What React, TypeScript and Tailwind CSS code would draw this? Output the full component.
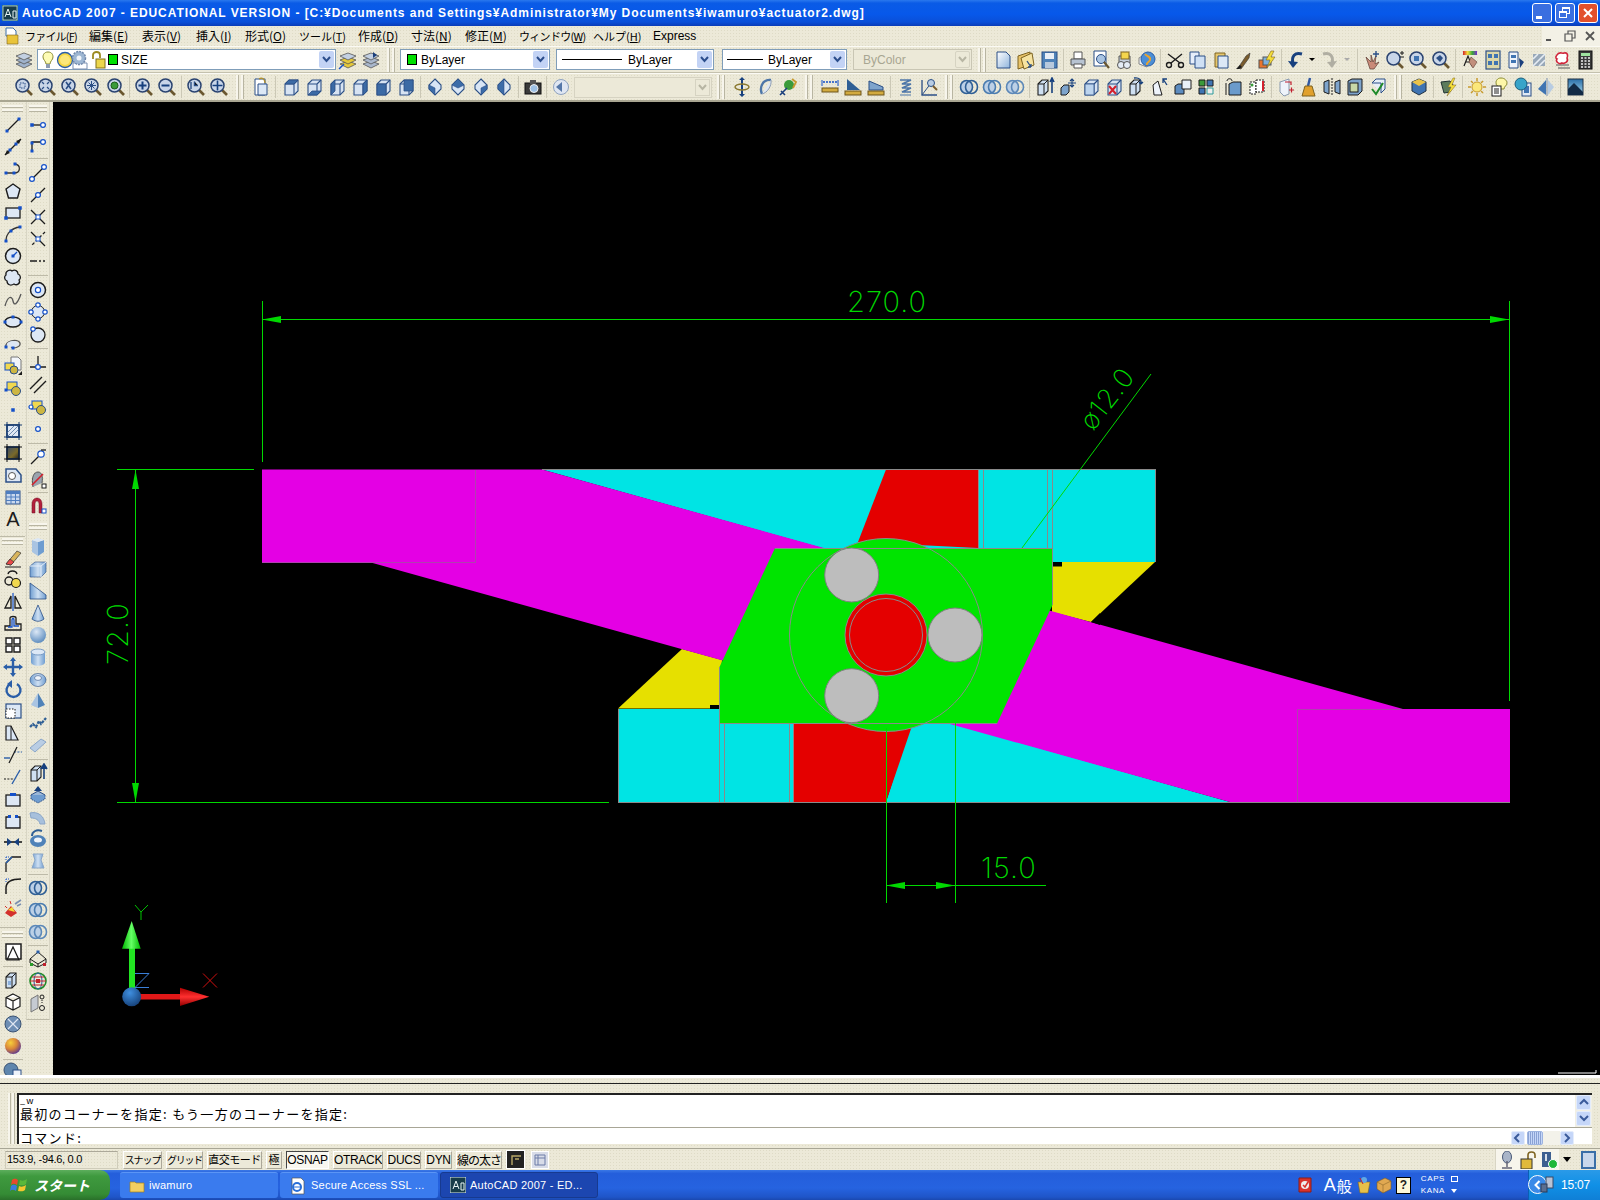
import type { ReactNode } from "react";

const k = "#1c1c1c";
const b = "#1450c8";
const f = "#dde7f4";
const sb = "url(#sb)";
const dk = "#2b4f86";
// speckled 8-bit beige of the toolbars
const dither = "bg-[#ece9d8] bg-[radial-gradient(#dedbc6_0.6px,transparent_0.7px)] bg-[length:3px_3px]";

const N = (x: number, y: number, s = 3) => <rect x={x - s / 2} y={y - s / 2} width={s} height={s} fill={b} />;
const O = (x: number, y: number, r = 2) => <circle cx={x} cy={y} r={r} fill="#fff" stroke={b} strokeWidth="1.2" />;
const P = (d: string, c = k, w = 1.3) => <path d={d} fill="none" stroke={c} strokeWidth={w} />;
const F = (d: string, c = sb, s = dk) => <path d={d} fill={c} stroke={s} strokeWidth="0.8" />;

// magnifier with something in the lens
const mag = (inner?: ReactNode) => (
  <>
    <path d="M13 13L18 18" stroke="#6a5730" strokeWidth="2.6" />
    <circle cx="8.5" cy="8.5" r="6.5" fill="#c8d5e8" stroke="#2a4370" strokeWidth="1.5" />
    {inner}
  </>
);
// wire cube, shade picks the filled face
const cube = (d?: string, c = "#3b6aa5") => (
  <>
    <path d="M4 7L8 3H17V14L13 18H4Z" fill="#d7e3f2" stroke={dk} strokeWidth="1.1" />
    <path d="M4 7H13V18M13 7L17 3" fill="none" stroke={dk} strokeWidth="1.1" />
    {d ? <path d={d} fill={c} stroke={dk} strokeWidth="0.8" /> : null}
  </>
);
const diamond = (d: string) => (
  <>
    <path d="M10 2L16 8V12L10 18L4 12V8Z" fill="#d8e5f5" stroke={dk} strokeWidth="1.1" />
    <path d={d} fill="#3c6ca8" stroke={dk} strokeWidth="0.6" />
  </>
);
const rings = (c = "#2f5f95") => (
  <>
    <ellipse cx="7.5" cy="10" rx="6" ry="6.5" fill="#bcd0e6" stroke={c} strokeWidth="1.6" />
    <ellipse cx="12.5" cy="10" rx="6" ry="6.5" fill="none" stroke={c} strokeWidth="1.6" />
  </>
);
const solid = (extra?: ReactNode) => (
  <>
    <path d="M3 7L7 3H13V14L9 18H3Z" fill="#cfe0f2" stroke={k} strokeWidth="1.1" />
    <path d="M3 7H9V18M9 7L13 3" fill="none" stroke={k} strokeWidth="1" />
    {extra}
  </>
);
const lay = (c: string) => (
  <>
    <path d="M10 11L18 14L10 18L2 14Z" fill={c} stroke="#555" strokeWidth="0.8" />
    <path d="M10 7L18 10L10 14L2 10Z" fill={c} stroke="#555" strokeWidth="0.8" />
    <path d="M10 3L18 6L10 10L2 6Z" fill="#c3d0e2" stroke="#555" strokeWidth="0.8" />
  </>
);

const icons: Record<string, ReactNode> = {
  // layer bar
  layers: lay("#9fb2cb"),
  bulb: (
    <>
      <path d="M10 2C6 2 5 5 5 7C5 10 8 11 8 14H12C12 11 15 10 15 7C15 5 14 2 10 2Z" fill="#fdfbb4" stroke="#8a8a30" />
      <rect x="8" y="14" width="4" height="4" fill="#8d9bb0" />
    </>
  ),
  sun: (
    <>
      <circle cx="10" cy="10" r="7.5" fill="#f6d743" stroke="#2a5ea8" strokeWidth="1.3" />
      <circle cx="10" cy="10" r="5" fill="#fbe77a" />
    </>
  ),
  gear: (
    <>
      <path d="M3 13H17V19H3Z" fill="#fff" stroke="#7a8fb0" />
      <circle cx="9" cy="8" r="6.5" fill="#9db6d2" stroke="#7088ab" strokeDasharray="2 1" strokeWidth="1.5" />
      <circle cx="9" cy="8" r="2.5" fill="#eef3f9" />
    </>
  ),
  lock: (
    <>
      <path d="M4 9V5C4 1 11 1 11 5V8" fill="none" stroke="#9c8a20" strokeWidth="1.8" />
      <rect x="7" y="9" width="9" height="9" fill="#ecd64c" stroke="#80701a" />
    </>
  ),
  layerPrev: (
    <>
      {lay("#e6c93a")}
      <path d="M1 19L6 14" stroke={b} strokeWidth="1.4" />
    </>
  ),
  layerState: (
    <>
      {lay("#a9b7cc")}
      <path d="M12 2L16 5L12 8Z" fill="#1a3f7c" />
    </>
  ),
  // standard
  doc: <path d="M4 2H13L17 6V18H4Z" fill="url(#sb2)" stroke={dk} />,
  open: (
    <>
      <path d="M2 6L14 2V15L2 19Z" fill="#e9c46a" stroke="#7d6320" />
      <path d="M5 8L16 3L18 15L8 19Z" fill="#f6e3a0" stroke="#7d6320" />
      <path d="M11 11L15 17M15 17L12 17M15 17V14" stroke={dk} strokeWidth="1.3" />
    </>
  ),
  save: (
    <>
      <rect x="3" y="2" width="15" height="16" fill="#4f82b8" stroke={dk} />
      <rect x="6" y="3" width="9" height="6" fill="#e8eef6" />
      <rect x="6" y="12" width="9" height="6" fill="#b8c9dd" />
    </>
  ),
  print: (
    <>
      <path d="M6 2H14V9H6Z" fill="#fff" stroke="#555" />
      <path d="M3 9H17V15H3Z" fill="#b7c3d2" stroke="#555" />
      <path d="M6 14H14V18H6Z" fill="#fff" stroke="#555" />
    </>
  ),
  preview: (
    <>
      <path d="M3 1H15V16H3Z" fill="#fff" stroke={dk} />
      <circle cx="10" cy="9" r="4.5" fill="#a9c4e2" stroke={dk} />
      <path d="M13 12L18 18" stroke="#6a5730" strokeWidth="2.2" />
    </>
  ),
  plot3: (
    <>
      <path d="M5 6H16V13H5Z" fill="#c5d0de" stroke="#555" />
      <rect x="7" y="2" width="8" height="7" fill="#f4d54c" stroke="#7d6320" />
      <circle cx="7" cy="15" r="3.5" fill="#e4ecf6" stroke="#555" />
      <circle cx="13" cy="15" r="3.5" fill="#e4ecf6" stroke="#555" />
    </>
  ),
  publish: (
    <>
      <path d="M2 8L10 3V17L2 14Z" fill="#eef1f6" stroke="#888" />
      <circle cx="11" cy="9" r="7" fill="#4c8fd6" stroke="#2a5ea8" />
      <path d="M8 4C10 7 14 6 13 10C12 13 9 12 10 15" stroke="#e8a32e" strokeWidth="2" fill="none" />
    </>
  ),
  cut: (
    <>
      <path d="M3 4L15 13M17 4L6 13" stroke={k} strokeWidth="1.4" />
      <circle cx="4" cy="15" r="2.5" fill="none" stroke={k} strokeWidth="1.4" />
      <circle cx="16" cy="15" r="2.5" fill="none" stroke={k} strokeWidth="1.4" />
    </>
  ),
  copy: (
    <>
      <path d="M2 2H11V14H2Z" fill="#e6eefa" stroke={dk} />
      <path d="M7 6H17V18H7Z" fill="#cfe0f4" stroke={dk} />
    </>
  ),
  paste: (
    <>
      <path d="M4 3H14V17H4Z" fill="#e6c66b" stroke="#7d6320" />
      <path d="M7 6H17V18H7Z" fill="#dce8f6" stroke={dk} />
    </>
  ),
  brush: (
    <>
      <path d="M4 18L12 6L16 3L15 8L7 19Z" fill="#7a5c2c" stroke="#333" strokeWidth="0.6" />
      <path d="M2 19L6 15L8 17L5 19Z" fill="#1c1c1c" />
    </>
  ),
  bolt: (
    <>
      <rect x="2" y="10" width="8" height="8" fill="#e9742c" stroke="#555" />
      <rect x="6" y="7" width="8" height="8" fill="#7fb0dc" stroke="#555" />
      <path d="M14 1L9 10H13L10 18L18 7H14L17 1Z" fill="#f5de3a" stroke="#7d6320" strokeWidth="0.6" />
    </>
  ),
  undo: (
    <>
      <path d="M16 4C9 2 5 6 7 14" fill="none" stroke="#17407e" strokeWidth="3" />
      <path d="M2 11L7 18L12 12Z" fill="#17407e" />
    </>
  ),
  redo: (
    <>
      <path d="M4 4C11 2 15 6 13 14" fill="none" stroke="#b0aea2" strokeWidth="3" />
      <path d="M18 11L13 18L8 12Z" fill="#b0aea2" />
    </>
  ),
  pan: (
    <>
      <path d="M4 7L9 12V5L11 12L14 6L13 14L17 12L12 19H8Z" fill="#c98a78" stroke="#5d3d33" strokeWidth="0.7" />
      <path d="M14 1V7M11 4H17" stroke={dk} strokeWidth="1.4" />
    </>
  ),
  zoomRT: mag(<path d="M15 3H19M17 1V5M15 7H19" stroke={k} />),
  zoomW: mag(<rect x="6" y="6" width="5" height="5" fill="#3f74b2" />),
  zoomP: mag(<path d="M5 8L9 5L12 8L9 12Z" fill={dk} />),
  props: (
    <>
      <rect x="3" y="1" width="14" height="4" fill="url(#sb3)" />
      <path d="M4 16L8 6L12 16M6 12H10" stroke={k} fill="none" strokeWidth="1.2" />
      <path d="M11 7L17 12L13 18L9 12Z" fill="#c28f7c" stroke="#5d3d33" strokeWidth="0.6" />
    </>
  ),
  design: (
    <>
      <rect x="3" y="1" width="14" height="18" fill="#dcd7a8" stroke={dk} strokeWidth="1.2" />
      <path d="M5 4H9V8H5ZM11 4H15V8H11ZM5 11H9V15H5ZM11 11H15V15H11Z" fill="#3f74b2" />
    </>
  ),
  palette: (
    <>
      <path d="M3 2H12V18H3Z" fill="#eef3fa" stroke={dk} />
      <path d="M5 5H10V8H5ZM5 10H10V13H5Z" fill="#3f74b2" />
      <path d="M13 8L18 12L14 18Z" fill="#1a3f7c" />
    </>
  ),
  sheet: (
    <>
      <path d="M4 4H16V16H4Z" fill="#98a8b8" />
      <path d="M4 16L16 4M4 9L9 4M10 16L16 10" stroke="#e6edf4" strokeWidth="1.6" />
    </>
  ),
  markup: (
    <>
      <path d="M4 15H17M6 18H18" stroke="#555" />
      <path d="M5 5C7 1 10 4 12 3C16 2 16 6 15 8C17 12 12 14 10 13C7 15 3 11 5 9C3 8 4 6 5 5Z" fill="#fff" stroke="#d0253a" strokeWidth="1.6" />
    </>
  ),
  calc: (
    <>
      <rect x="4" y="1" width="13" height="18" fill="#3a3a3a" stroke="#111" />
      <rect x="6" y="3" width="9" height="3" fill="#9fe3a0" />
      <path d="M6 8H8M9.5 8H11.5M13 8H15M6 11H8M9.5 11H11.5M13 11H15M6 14H8M9.5 14H11.5M13 14H15M6 17H8M9.5 17H11.5M13 17H15" stroke="#eee" strokeWidth="1.5" />
    </>
  ),
  // zoom bar
  zA: mag(<path d="M6 6H11V11H6Z" fill="none" stroke={dk} strokeDasharray="1.5 1" />),
  zB: mag(<path d="M5 5L7 7M12 5L10 7M5 12L7 10M12 12L10 10" stroke={dk} strokeWidth="1.2" />),
  zC: mag(<path d="M6 5L11 12M11 5L6 12" stroke={dk} strokeWidth="1.6" />),
  zD: mag(<path d="M8.5 4V13M4 8.5H13M5.5 5.5L11.5 11.5M11.5 5.5L5.5 11.5" stroke={dk} />),
  zE: mag(<circle cx="8.5" cy="8.5" r="3.5" fill="#3a9b3a" stroke="#1b5d1b" />),
  zIn: mag(<path d="M8.5 4.5V12.5M4.5 8.5H12.5" stroke="#17407e" strokeWidth="2" />),
  zOut: mag(<path d="M4.5 8.5H12.5" stroke="#17407e" strokeWidth="2" />),
  zPrev: mag(<path d="M8.5 4.5V8.5H12M5 12V5" stroke={dk} strokeWidth="1.4" />),
  zPan: mag(<path d="M8.5 3.5V13.5M3.5 8.5H13.5" stroke="#17407e" strokeWidth="1.6" />),
  // views
  vDoc: (
    <>
      <path d="M4 2H14V18H4Z" fill="#fff" stroke={dk} />
      <path d="M7 7H16V18H7Z" fill="#dce8f6" stroke={dk} />
      <path d="M8 2C11 0 14 2 14 6" stroke="#b09030" fill="none" strokeWidth="1.4" />
    </>
  ),
  v1: cube("M4 7L8 3H17L13 7Z"),
  v2: cube("M4 18H13L17 14H8Z"),
  v3: cube("M4 7L8 3V14L4 18Z"),
  v4: cube("M13 7L17 3V14L13 18Z"),
  v5: cube("M4 7H13V18H4Z"),
  v6: cube("M8 3H17V14H8Z"),
  d1: diamond("M4 8L10 11V18L4 12Z"),
  d2: diamond("M10 2L16 8L10 11L4 8Z"),
  d3: diamond("M16 8L10 11V18L16 12Z"),
  d4: diamond("M4 8L10 2V18L4 12Z"),
  camera: (
    <>
      <rect x="2" y="6" width="16" height="11" fill="#3b3b3b" stroke="#111" />
      <rect x="7" y="3" width="6" height="4" fill="#555" />
      <circle cx="11" cy="11.5" r="4" fill="#9dc0e4" stroke="#eee" />
    </>
  ),
  back: (
    <>
      <circle cx="10" cy="10" r="7.5" fill="#dfe6f2" stroke="#8ea2c0" />
      <path d="M5 10L11 5V15Z" fill="#5577a8" />
    </>
  ),
  // orbit
  o1: (
    <>
      <path d="M10 1V19" stroke="#17407e" strokeWidth="2" />
      <ellipse cx="10" cy="10" rx="7" ry="3" fill="none" stroke="#8c7a30" strokeWidth="1.5" />
      <path d="M7 3L10 0L13 3ZM7 17L10 20L13 17Z" fill="#17407e" />
    </>
  ),
  o2: (
    <>
      <path d="M16 3C8 2 4 10 7 17" fill="none" stroke="#4d76a8" strokeWidth="2.4" />
      <path d="M16 3C17 9 12 16 7 17" fill="#dde7f4" stroke="#8a9ab0" />
    </>
  ),
  o3: (
    <>
      <circle cx="11" cy="8" r="5" fill="#3a9b3a" />
      <path d="M2 18L9 11M7 18L3 14" stroke="#1a3f7c" strokeWidth="1.6" />
      <path d="M14 2L18 5L15 11" stroke="#c79a2e" strokeWidth="1.8" fill="none" />
    </>
  ),
  // dims
  dm1: (
    <>
      <path d="M3 5H17" stroke={b} strokeDasharray="2 1" strokeWidth="1.6" />
      <rect x="2" y="11" width="16" height="4" fill="#d2aa3e" stroke="#6c541a" />
      <path d="M2 3V9M18 3V9" stroke={b} />
    </>
  ),
  dm2: (
    <>
      <path d="M4 2L17 13H4Z" fill="#2f5f95" />
      <rect x="2" y="14" width="16" height="4" fill="#d2aa3e" stroke="#6c541a" />
    </>
  ),
  dm3: (
    <>
      <path d="M3 4L17 10V13H3Z" fill="#7ea4cc" stroke={dk} />
      <rect x="2" y="14" width="16" height="4" fill="#d2aa3e" stroke="#6c541a" />
    </>
  ),
  dm4: (
    <>
      <path d="M4 3H15L6 7H15L6 11H15L6 15H15" fill="none" stroke="#4d76a8" strokeWidth="1.6" />
      <path d="M4 18H15" stroke="#4d76a8" />
    </>
  ),
  dm5: (
    <>
      <path d="M3 3V18H18" fill="none" stroke={dk} strokeWidth="1.3" />
      <path d="M3 18L12 6" stroke={dk} />
      <circle cx="12" cy="6" r="3.5" fill="#b9cde4" stroke={dk} />
      <path d="M14 9L18 13" stroke="#7a5c2c" strokeWidth="2" />
    </>
  ),
  // solids editing
  r1: rings(),
  r2: rings("#4a7cb0"),
  r3: rings("#5c88b8"),
  s1: solid(<path d="M17 2V16M15 5L17 1L19 5" stroke="#17407e" strokeWidth="1.6" fill="none" />),
  s2: (
    <>
      <path d="M3 11L6 8H11V15L8 18H3Z" fill="#7ea4cc" stroke={k} />
      <path d="M14 2V10M10 6H18M12 4L14 2L16 4M12 8L14 10L16 8" stroke="#17407e" strokeWidth="1.1" fill="none" />
    </>
  ),
  s3: cube("M4 7H13V18H4Z", "#bcd4ee"),
  s4: (
    <>
      {cube()}
      <path d="M5 9L12 17M12 9L5 17" stroke="#d3202c" strokeWidth="2" />
    </>
  ),
  s5: solid(<path d="M7 1C12 0 15 3 14 7M14 7L12 5M14 7L16 5" stroke="#17407e" strokeWidth="1.3" fill="none" />),
  s6: (
    <>
      <path d="M3 8L8 4L12 18H4Z" fill="#eef3fa" stroke={k} />
      <path d="M13 2L17 8M13 6V2H17" stroke="#17407e" strokeWidth="1.3" fill="none" />
    </>
  ),
  s7: (
    <>
      <path d="M2 9L5 7H11V17H2Z" fill="#5d8cbf" stroke={k} />
      <path d="M9 3H18V12H9Z" fill="#eaf1f9" stroke={k} />
    </>
  ),
  s8: (
    <>
      <path d="M3 3H9V9H3Z" fill="#3a9b3a" stroke={k} />
      <path d="M11 3H17V9H11ZM3 11H9V17H3Z" fill="#3f74b2" stroke={k} />
      <path d="M11 11H17V17H11Z" fill="#eee" stroke="#2d9b9b" />
    </>
  ),
  s9: (
    <>
      <path d="M5 7L9 5H17V18H5Z" fill="#6b9bcc" stroke={k} />
      <path d="M3 4C3 1 8 1 8 4M2 18V6" stroke={k} fill="none" />
    </>
  ),
  s10: (
    <>
      <path d="M3 5H9V17H3Z" fill="#fff" stroke={k} strokeDasharray="2 1" />
      <path d="M9 3H17V15H9Z" fill="#fff" stroke={k} strokeDasharray="2 1" />
      <path d="M16 4V14" stroke="#d3202c" strokeWidth="2" />
      <circle cx="5" cy="8" r="1.5" fill="#3a9b3a" />
    </>
  ),
  s11: (
    <>
      <path d="M4 5L13 2V17L8 19L4 15Z" fill="#eef3fa" stroke="#8a9ab0" />
      <path d="M9 5H15V8M13 13H18M15.5 10.5V15.5" stroke="#c02030" strokeWidth="1.2" fill="none" />
    </>
  ),
  broom: (
    <>
      <path d="M11 1L9 9" stroke="#3158a0" strokeWidth="2.4" />
      <path d="M6 9H13L16 19H3Z" fill="#e0a02c" stroke="#7d6320" />
    </>
  ),
  s13: (
    <>
      <path d="M2 5L7 3V17L2 15Z" fill="#7ea4cc" stroke={k} />
      <path d="M13 5L18 3V17L13 15Z" fill="#7ea4cc" stroke={k} />
      <path d="M10 1V19" stroke={k} strokeDasharray="2 1" />
    </>
  ),
  s14: (
    <>
      <path d="M3 4L7 2H17V14L13 18H3Z" fill="#7ea4cc" stroke={k} />
      <rect x="5" y="6" width="8" height="9" fill="#c8d8a8" stroke={k} />
    </>
  ),
  s15: (
    <>
      <path d="M4 6L8 2H17V12L13 16" fill="#e6eff8" stroke={dk} />
      <path d="M4 6H13V16" fill="none" stroke={dk} />
      <path d="M4 12L8 17L15 6" fill="none" stroke="#1e8a28" strokeWidth="2" />
    </>
  ),
  // render bar
  rn1: (
    <>
      <path d="M10 2L17 5V14L10 18L3 14V5Z" fill="#3f74b2" stroke="#234" />
      <path d="M10 2L17 5L10 9L3 5Z" fill="#e9c34a" />
    </>
  ),
  rn2: (
    <>
      <path d="M3 5L12 4L15 8L12 15L6 16Z" fill="#5c7b5c" stroke="#233" />
      <path d="M15 1L10 10H13L9 19L18 8H14L17 1Z" fill="#f5de3a" stroke="#7d6320" strokeWidth="0.5" />
    </>
  ),
  rn3: (
    <>
      <circle cx="10" cy="10" r="5" fill="#fbe77a" stroke="#c79a2e" />
      <path d="M10 1V4M10 16V19M1 10H4M16 10H19M4 4L6 6M14 14L16 16M16 4L14 6M4 16L6 14" stroke="#c79a2e" strokeWidth="1.5" />
    </>
  ),
  rn4: (
    <>
      <path d="M11 1C7 1 6 4 6 6C6 9 9 9 9 12H14C14 9 17 9 17 6C17 4 15 1 11 1Z" fill="#fdf7a8" stroke="#8a8a30" />
      <rect x="2" y="9" width="9" height="10" fill="#fff" stroke={k} />
      <path d="M4 12H9M4 14H9M4 16H9" stroke={k} />
    </>
  ),
  rn5: (
    <>
      <rect x="9" y="6" width="9" height="13" fill="#dfe8f4" stroke={dk} />
      <rect x="11" y="9" width="5" height="7" fill="#3f74b2" />
      <circle cx="8" cy="7" r="6" fill="#37a4c9" stroke="#1a5d7c" />
    </>
  ),
  rn6: (
    <>
      <path d="M10 3V18L2 12Z" fill="#3f74b2" />
      <path d="M12 3L18 10L12 18Z" fill="#b8cce2" />
      <path d="M11 1V19" stroke="#7a8fb0" />
    </>
  ),
  rn7: (
    <>
      <rect x="3" y="2" width="15" height="16" fill="url(#sb4)" stroke="#234" />
      <path d="M3 12L9 6L18 15V18H3Z" fill="#122a45" />
    </>
  ),
  // left bar, draw
  line: (
    <>
      {P("M4 16L16 4")}
      {N(4, 16)}
      {N(16, 4)}
    </>
  ),
  xline: (
    <>
      {P("M2 18L18 2")}
      <path d="M2 18L4 13L7 16ZM18 2L13 4L16 7Z" fill={k} />
      {N(7, 13)}
      {N(13, 7)}
    </>
  ),
  pline: (
    <>
      {P("M3 14H11C18 14 18 6 12 5", "#333")}
      {N(3, 14)}
      {N(11, 14)}
      {N(12, 5)}
    </>
  ),
  polygon: <path d="M10 3L17 8L14.5 17H5.5L3 8Z" fill={f} stroke={k} strokeWidth="1.4" />,
  rect: (
    <>
      <rect x="3" y="5" width="14" height="10" fill={f} stroke={k} strokeWidth="1.3" />
      {N(3, 15, 3.5)}
      {N(17, 5, 3.5)}
    </>
  ),
  arc: (
    <>
      {P("M3 17C3 9 9 4 17 3", "#333")}
      {N(3, 17)}
      {N(8, 7)}
      {N(17, 3)}
    </>
  ),
  circle: (
    <>
      <circle cx="10" cy="10" r="7.5" fill={f} stroke={k} strokeWidth="1.5" />
      {P("M10 10L14 6", b)}
      {N(10, 10)}
    </>
  ),
  cloud: (
    <path
      d="M3 7C2 3 7 1 9 3C12 1 15 3 15 6C18 7 18 11 16 12C18 15 14 18 11 16C8 18 4 17 4 13C1 12 1 8 3 7Z"
      fill={f}
      stroke={k}
      strokeWidth="1.3"
    />
  ),
  spline: P("M2 16C5 5 9 6 10 11S14 15 18 4", "#555"),
  ellipse: (
    <>
      <ellipse cx="10" cy="10" rx="8" ry="5" fill={f} stroke={k} strokeWidth="1.4" />
      {N(2, 10)}
      {N(18, 10)}
      {N(10, 5)}
    </>
  ),
  ellarc: (
    <>
      {P("M3 13C1 7 15 4 17 9C18 13 11 15 8 13", "#555")}
      <ellipse cx="10" cy="10" rx="6" ry="3" fill={f} />
      {N(3, 13)}
      {N(10, 14)}
    </>
  ),
  insert: (
    <>
      <path d="M8 1H15L18 4V14H8Z" fill="#f2f5fa" stroke="#777" />
      <rect x="2" y="7" width="9" height="7" fill="#f1d84e" stroke={b} />
      <circle cx="11" cy="14" r="4" fill="#cdb642" stroke={dk} />
      <path d="M15 19L19 15V19Z" fill={k} />
    </>
  ),
  block: (
    <>
      <rect x="4" y="4" width="10" height="8" fill="#f1d84e" stroke={b} />
      <circle cx="13" cy="13" r="4.5" fill="#cdb642" stroke={dk} />
      {N(3, 12)}
    </>
  ),
  point: N(10, 10, 3.5),
  hatch: (
    <>
      <rect x="4" y="4" width="12" height="12" fill="#dfe8f4" stroke="#12386e" strokeWidth="1.6" />
      <path d="M4 12L12 4M4 16L16 4M8 16L16 8" stroke="#6d8bb0" />
      <path d="M1 4H19M1 16H19M4 1V19M16 1V19" stroke="#12386e" />
    </>
  ),
  gradient: (
    <>
      <rect x="4" y="4" width="12" height="12" fill="url(#sb5)" stroke="#12386e" strokeWidth="1.6" />
      <path d="M1 4H19M1 16H19M4 1V19M16 1V19" stroke="#111" />
    </>
  ),
  region: (
    <>
      <path d="M3 4H13L18 10V17H3Z" fill={f} stroke={dk} strokeWidth="1.5" />
      <circle cx="9" cy="11" r="3.5" fill="#fff" stroke="#555" />
    </>
  ),
  table: (
    <>
      <rect x="3" y="4" width="14" height="13" fill="#c9d8ee" stroke={dk} />
      <rect x="3" y="4" width="14" height="3" fill="#4f7ec0" />
      <path d="M3 10H17M3 13.5H17M8 7V17M12.5 7V17" stroke="#4f7ec0" />
    </>
  ),
  A: (
    <text x="10" y="17" textAnchor="middle" fontSize="20" fontFamily="Liberation Sans, sans-serif" fill={k}>
      A
    </text>
  ),
  // left bar, modify
  eraser: (
    <>
      <path d="M3 16L14 3L18 5L8 17Z" fill="#d8b45c" stroke="#333" strokeWidth="0.7" />
      <path d="M3 16L7 11L11 14L8 17Z" fill="#e94a4a" stroke="#333" strokeWidth="0.7" />
      <path d="M2 19H18" stroke={k} />
    </>
  ),
  mcopy: (
    <>
      <path d="M5 4C6 0 13 0 14 4" fill="none" stroke={k} strokeWidth="1.4" />
      <circle cx="6" cy="11" r="4" fill="none" stroke={k} strokeWidth="1.4" />
      <circle cx="13" cy="13" r="4.5" fill="#f1d84e" stroke={k} strokeWidth="1.2" />
    </>
  ),
  mirror: (
    <>
      <path d="M8 4L2 16H8Z" fill="none" stroke={k} strokeWidth="1.3" />
      <path d="M12 4L18 16H12Z" fill="none" stroke={k} strokeWidth="1.3" />
      <path d="M10 1V19" stroke={b} strokeWidth="1.2" />
    </>
  ),
  offset: (
    <>
      {P("M2 16V12H7V4C7 2 13 2 13 4V10H18V16Z", k)}
      {P("M5 13H9V6C9 4 11 4 11 6V12H16", b)}
    </>
  ),
  array: <path d="M3 3H9V9H3ZM11 3H17V9H11ZM3 11H9V17H3ZM11 11H17V17H11Z" fill="#fff" stroke={k} strokeWidth="1.4" />,
  move: (
    <>
      <path d="M10 2V18M2 10H18" stroke="#2a5ea8" strokeWidth="2.4" />
      <path d="M10 0L13 4H7ZM10 20L13 16H7ZM0 10L4 7V13ZM20 10L16 7V13Z" fill="#2a5ea8" />
    </>
  ),
  rotate: (
    <>
      <path d="M7 5A7 7 0 1 0 14 5" fill="none" stroke="#2a5ea8" strokeWidth="2.4" />
      <path d="M9 1L4 5L9 9Z" fill="#2a5ea8" />
    </>
  ),
  scale: (
    <>
      <rect x="3" y="3" width="15" height="14" fill="#dbe7f5" stroke={dk} strokeWidth="1.2" />
      <rect x="3" y="8" width="9" height="9" fill="#fff" stroke={k} strokeDasharray="1.5 1.5" />
    </>
  ),
  stretch: (
    <>
      <path d="M3 3H8L15 17H3Z" fill="#dbe7f5" stroke={k} strokeWidth="1.2" />
      <path d="M8 3V17" stroke={k} />
    </>
  ),
  trim: (
    <>
      <path d="M1 13H7" stroke="#2a5ea8" strokeWidth="1.4" />
      <path d="M11 7H19" stroke="#2a5ea8" strokeDasharray="2 1.4" />
      <path d="M6 18L14 2" stroke={k} strokeWidth="1.3" />
    </>
  ),
  extend: (
    <>
      <path d="M1 12H11" stroke={k} strokeDasharray="2 1.4" />
      <path d="M9 17L17 3" stroke="#2a5ea8" strokeWidth="1.4" />
    </>
  ),
  breakp: (
    <>
      <rect x="3" y="6" width="14" height="11" fill={f} stroke={k} strokeWidth="1.3" />
      <rect x="7" y="4" width="6" height="3" fill={b} />
    </>
  ),
  break2: (
    <>
      <path d="M7 6H3V17H17V6H13" fill={f} stroke={k} strokeWidth="1.3" />
      <rect x="5" y="4" width="3" height="3" fill={b} />
      <rect x="12" y="4" width="3" height="3" fill={b} />
    </>
  ),
  join: (
    <>
      <path d="M1 10H19" stroke={k} strokeWidth="1.6" />
      <path d="M9 10L4 6V14ZM11 10L16 6V14Z" fill="#17407e" />
    </>
  ),
  chamfer: (
    <>
      <path d="M3 18V9L9 3H18" fill="none" stroke={k} strokeWidth="1.3" />
      <path d="M3 9L9 3" stroke="#2a5ea8" strokeWidth="1.6" />
      <path d="M3 3H6M3 3V6" stroke={b} strokeDasharray="1 1" />
    </>
  ),
  fillet: (
    <>
      <path d="M3 18V12C3 6 8 3 18 3" fill="none" stroke={k} strokeWidth="1.5" />
      <path d="M3 3H6M3 3V6" stroke={b} strokeDasharray="1 1" />
    </>
  ),
  explode: (
    <>
      <path d="M2 15L8 8L14 15L8 19Z" fill="#d3302c" />
      <path d="M5 12L9 9L12 14Z" fill="#f5de3a" />
      <path d="M12 6L18 2M14 8L18 6" stroke="#7a8fb0" strokeWidth="1.6" />
      <path d="M2 8L4 10M7 3L8 6" stroke="#d3302c" />
    </>
  ),
  // left bar, below
  vp: (
    <>
      <rect x="3" y="2" width="15" height="15" fill="#fff" stroke={k} strokeWidth="1.5" />
      <path d="M4 18L10 5L16 18Z" fill="none" stroke={k} strokeWidth="1.2" />
    </>
  ),
  box1: solid(<rect x="5" y="11" width="3" height="4" fill="#8cb0dc" />),
  box2: (
    <path d="M10 2L17 5.5V14.5L10 18L3 14.5V5.5ZM3 5.5L10 9L17 5.5M10 9V18" fill="#fff" stroke={k} strokeWidth="1.2" />
  ),
  ball1: (
    <>
      <circle cx="10" cy="10" r="8" fill="#6e8eb4" stroke="#3a5272" />
      <path d="M5 5L15 15M15 5L5 15" stroke="#dfe6f2" strokeWidth="1.2" />
    </>
  ),
  ball2: <circle cx="10" cy="10" r="8" fill="url(#sb6)" />,
  globeDoc: (
    <>
      <circle cx="8" cy="8" r="7" fill="#5f86ad" stroke="#3a5272" />
      <rect x="10" y="8" width="8" height="10" fill="#eef3fa" stroke={dk} />
    </>
  ),
  // left bar 2
  n1: (
    <>
      {P("M3 10H13", k)}
      {N(4, 10, 3.5)}
      {O(15, 10, 2.4)}
    </>
  ),
  n2: (
    <>
      {P("M4 15V7H13", k)}
      {N(4, 8, 3)}
      {N(4, 16, 3)}
      {O(15, 7, 2.4)}
    </>
  ),
  n3: (
    <>
      {P("M5 15L15 5", k)}
      {O(4, 16, 2.4)}
      {O(16, 4, 2.4)}
    </>
  ),
  n4: (
    <>
      {P("M3 17L17 3", k)}
      {O(10, 10, 2.4)}
    </>
  ),
  n5: (
    <>
      {P("M3 3L17 17M17 3L3 17", k)}
      <rect x="8" y="8" width="4" height="4" fill="#fff" stroke={b} />
    </>
  ),
  n6: (
    <>
      <path d="M3 3L17 17" stroke={k} strokeWidth="1.3" />
      <path d="M17 3L3 17" stroke={k} strokeWidth="1.3" strokeDasharray="3 2" />
      <rect x="8" y="8" width="4" height="4" fill="#fff" stroke={b} />
    </>
  ),
  n7: <path d="M2 10H9M11 10H13M15 10H17" stroke={k} strokeWidth="1.5" />,
  n8: (
    <>
      <circle cx="10" cy="10" r="7.5" fill={f} stroke={k} strokeWidth="1.5" />
      {O(10, 10, 2.6)}
    </>
  ),
  n9: (
    <>
      <circle cx="10" cy="10" r="6.5" fill={f} stroke={k} />
      {O(10, 3, 2.2)}
      {O(10, 17, 2.2)}
      {O(3, 10, 2.2)}
      {O(17, 10, 2.2)}
    </>
  ),
  n10: (
    <>
      <circle cx="10" cy="11" r="7" fill={f} stroke={k} strokeWidth="1.3" />
      {O(5, 5, 2.2)}
    </>
  ),
  n11: (
    <>
      {P("M2 14H18M10 3V14", k)}
      {O(10, 14, 2.4)}
    </>
  ),
  n12: <path d="M2 14L14 2M6 18L18 6" stroke={k} strokeWidth="1.4" />,
  n13: (
    <>
      <rect x="4" y="4" width="10" height="8" fill="#f1d84e" stroke={b} />
      <circle cx="13" cy="13" r="4.5" fill="#cdb642" stroke={dk} />
      {O(3, 10, 2)}
    </>
  ),
  n14: O(10, 10, 2.4),
  n15: (
    <>
      {P("M3 17L11 9", k)}
      {O(13, 7, 3.2)}
      {P("M13 3L18 3", k)}
    </>
  ),
  n16: (
    <>
      <path d="M5 18C3 8 6 3 10 3S15 8 14 14" fill="#9aa3ae" stroke="#555" />
      <path d="M4 16L15 5" stroke="#d3202c" strokeWidth="1.6" />
      <rect x="14" y="15" width="4" height="4" fill="#fff" stroke={k} />
    </>
  ),
  magnet: (
    <>
      <path d="M4 18V9C4 1 14 1 14 9V18H11V9C11 5 7 5 7 9V18Z" fill="#b3203c" stroke="#6d1225" strokeWidth="0.5" />
      <rect x="14" y="14" width="4" height="4" fill="#fff" stroke={b} />
    </>
  ),
  // 3D solids
  t1: (
    <>
      <path d="M4 3L10 5V19L4 15Z" fill="#a9c4e2" />
      <path d="M10 5L16 3V15L10 19Z" fill="#6f9dd0" />
      <path d="M4 3L10 1L16 3L10 5Z" fill="#dce8f6" />
    </>
  ),
  t2: (
    <>
      <path d="M2 7L7 3H18V13L13 18H2Z" fill={sb} stroke={dk} strokeWidth="0.6" />
      <path d="M2 7H13V18M13 7L18 3" fill="none" stroke="#e6eef8" />
    </>
  ),
  t3: F("M2 2L18 14V18H2Z"),
  t4: F("M10 2L16 16C12 19 8 19 4 16Z"),
  t5: <circle cx="10" cy="10" r="8" fill="url(#sb7)" />,
  t6: (
    <>
      <path d="M3 5V15C3 20 17 20 17 15V5Z" fill={sb} />
      <ellipse cx="10" cy="5" rx="7" ry="3" fill="#dce8f6" stroke="#7a9cc4" />
    </>
  ),
  t7: (
    <>
      <ellipse cx="10" cy="11" rx="8" ry="6.5" fill={sb} stroke={dk} strokeWidth="0.6" />
      <ellipse cx="10" cy="9" rx="3.5" ry="2.4" fill="#eef3fa" stroke={dk} strokeWidth="0.6" />
    </>
  ),
  t8: (
    <>
      <path d="M10 2L3 14L10 17Z" fill="#a9c4e2" />
      <path d="M10 2L17 14L10 17Z" fill="#4f82b8" />
    </>
  ),
  t9: <path d="M2 14L5 11L8 14L11 8L13 11L18 5" fill="none" stroke="#2f5f95" strokeWidth="2.2" strokeDasharray="3 1" />,
  t10: <path d="M2 13L13 4L18 7L7 17Z" fill="#b9cde4" stroke="#8aa6c8" />,
  u1: solid(<path d="M16 16V4M13 6L16 1L19 6" stroke="#17407e" strokeWidth="1.6" fill="#17407e" />),
  u2: (
    <>
      <path d="M10 1L14 6H6Z" fill="#17407e" />
      <path d="M3 10L10 6L17 10L10 14Z" fill="#9cb8d8" stroke={dk} />
      <path d="M3 10V14L10 18L17 14V10" fill="#6f9dd0" stroke={dk} strokeDasharray="1.5 1" />
    </>
  ),
  u3: (
    <path d="M2 6C10 4 16 9 17 17L12 17C11 13 8 11 3 11Z" fill="#a7c0dc" stroke="#8aa6c8" />
  ),
  u4: (
    <>
      <ellipse cx="10" cy="12" rx="8" ry="6" fill="#4f82b8" />
      <ellipse cx="10" cy="11" rx="4" ry="2.5" fill="#eef3fa" />
      <path d="M14 2C8 0 4 3 4 7" fill="none" stroke="#2f5f95" strokeWidth="2" />
    </>
  ),
  u5: <path d="M5 3H15L13 9L16 17H4L7 9Z" fill={sb} stroke="#8aa6c8" />,
  w1: (
    <>
      <path d="M2 10L10 3L18 10L10 15Z" fill="none" stroke={k} strokeWidth="1" />
      <path d="M2 10V14L10 18L18 14V10M10 15V18" fill="none" stroke={k} />
      <rect x="2" y="14" width="3" height="3" fill="#2a9b2a" />
      <rect x="15" y="14" width="3" height="3" fill="#c0202c" />
      <rect x="8.5" y="1.5" width="3" height="3" fill="#2a5ea8" />
    </>
  ),
  w2: (
    <>
      <circle cx="10" cy="10" r="8" fill="none" stroke="#1e8a28" strokeWidth="1.6" />
      <ellipse cx="10" cy="10" rx="4" ry="8" fill="none" stroke="#2a5ea8" />
      <path d="M2 10H18M4 6H16M4 14H16" stroke="#c0202c" />
      <rect x="8" y="8" width="4" height="4" fill="#c0202c" />
    </>
  ),
  w3: (
    <>
      <path d="M3 6L10 2V15L3 19Z" fill="#c5cad2" stroke="#777" />
      <circle cx="14" cy="4" r="2" fill="none" stroke={k} />
      <circle cx="14" cy="15" r="2.5" fill="none" stroke={k} />
      <path d="M14 7V11" stroke={k} strokeDasharray="1 1" />
    </>
  ),
};

function Icon({ name }: { name: string }) {
  return (
    <svg viewBox="0 0 20 20" className="w-5 h-5 block">
      {icons[name]}
    </svg>
  );
}

// horizontal toolbar slot
function Btn({ name }: { name: string }) {
  return (
    <div className="w-[23px] h-full shrink-0 flex items-center justify-center">
      <Icon name={name} />
    </div>
  );
}

function Sep({ w = "w-[5px]" }: { w?: string }) {
  return (
    <div className={`${w} h-full shrink-0 flex items-center justify-center`}>
      <div className="w-px h-[22px] bg-[#cbc8b6]" />
    </div>
  );
}

function Grip({ w }: { w: string }) {
  return (
    <div className={`${w} h-full shrink-0 flex items-center justify-center gap-[2px] relative`}>
      <div className="w-[3px] h-[24px] bg-[#f7f5ec] border-r border-[#b8b5a2]" />
      <div className="w-[3px] h-[24px] bg-[#f7f5ec] border-r border-[#b8b5a2]" />
    </div>
  );
}

function Combo({ w, disabled, children }: { w: string; disabled?: boolean; children: ReactNode }) {
  return (
    <div
      className={`${w} h-[21px] shrink-0 flex items-center border relative ${
        disabled ? "border-[#c9c6b4] bg-[#ece9d8] text-[#a8a692]" : "border-[#7f9db9] bg-white text-black"
      }`}
    >
      {children}
      <div
        className={`absolute right-px top-px bottom-px w-[15px] flex items-center justify-center rounded-[2px] ${
          disabled ? "bg-[#ece9d8] border border-[#d6d3c2]" : "bg-[#c3d3f5]"
        }`}
      >
        <svg viewBox="0 0 9 7" className="w-[9px] h-[7px]">
          <path d="M1 1L4.5 5L8 1" fill="none" stroke={disabled ? "#b8b6a4" : "#2b4d8c"} strokeWidth="2" />
        </svg>
      </div>
    </div>
  );
}

const Swatch = () => <span className="w-[10px] h-[11px] bg-[#00e000] border border-black shrink-0" />;

// kana items are set tight, the screenshot's kana are half width
const menus = [
  { t: "ファイル(", m: "F", w: "w-[64px] text-[11px] tracking-[-0.8px]" },
  { t: "編集(", m: "E", w: "w-[53px]" },
  { t: "表示(", m: "V", w: "w-[54px]" },
  { t: "挿入(", m: "I", w: "w-[49px]" },
  { t: "形式(", m: "O", w: "w-[54px]" },
  { t: "ツール(", m: "T", w: "w-[59px] text-[11px]" },
  { t: "作成(", m: "D", w: "w-[53px]" },
  { t: "寸法(", m: "N", w: "w-[54px]" },
  { t: "修正(", m: "M", w: "w-[54px]" },
  { t: "ウィンドウ(", m: "W", w: "w-[74px] text-[11px] tracking-[-0.7px]" },
  { t: "ヘルプ(", m: "H", w: "w-[60px] text-[11px]" },
];

function TitleBar() {
  return (
    <div className="h-[26px] shrink-0 flex items-center pl-[2px] bg-[linear-gradient(180deg,#2a78ee_0%,#0a5be6_12%,#0758ea_55%,#0a4fd8_85%,#0a3cb8_100%)]">
      <svg viewBox="0 0 16 16" className="w-4 h-4 shrink-0">
        <rect width="16" height="16" fill="#2b6f73" />
        <rect x="1" y="1" width="14" height="14" fill="#173c4a" stroke="#dfeeee" strokeWidth="0.7" />
        <path d="M3 12L6 4L9 12M4 9.5H8M11 6H14V13H11Z" fill="none" stroke="#e8f4f4" />
      </svg>
      <span className="ml-[4px] text-white font-bold text-[12px] tracking-[0.93px] whitespace-nowrap">
        AutoCAD 2007 - EDUCATIONAL VERSION - [C:¥Documents and Settings¥Administrator¥My Documents¥iwamuro¥actuator2.dwg]
      </span>
      <div className="ml-auto flex items-center gap-[3px] pr-[2px]">
        <div className="w-[20px] h-[20px] rounded-[3px] border border-white bg-[#3a6fe0] flex items-end p-[3px]">
          <div className="w-[6px] h-[3px] bg-white" />
        </div>
        <div className="w-[20px] h-[20px] rounded-[3px] border border-white bg-[#3a6fe0] relative">
          <div className="absolute left-[6px] top-[3px] w-[8px] h-[7px] border border-white border-t-2" />
          <div className="absolute left-[3px] top-[7px] w-[8px] h-[7px] border border-white border-t-2 bg-[#3a6fe0]" />
        </div>
        <div className="w-[20px] h-[20px] rounded-[3px] border border-white bg-[#e2502c] flex items-center justify-center">
          <svg viewBox="0 0 12 12" className="w-3 h-3">
            <path d="M2 2L10 10M10 2L2 10" stroke="#fff" strokeWidth="2" />
          </svg>
        </div>
      </div>
    </div>
  );
}

function MenuBar() {
  return (
    <div className={`h-[20px] shrink-0 ${dither} flex items-center text-[12px] text-black pl-[4px] [font-family:'Noto_Sans_CJK_JP',sans-serif]`}>
      <svg viewBox="0 0 16 18" className="w-4 h-[18px] shrink-0">
        <path d="M2 1H9L12 4V9H2Z" fill="#fff" stroke="#3a6fa8" />
        <path d="M3 8H14V17H3Z" fill="#e9c43a" stroke="#7d6320" strokeWidth="0.6" />
      </svg>
      <div className="flex items-center ml-[5px]">
        {menus.map((m) => (
          <span key={m.t} className={`${m.w} shrink-0 whitespace-nowrap`}>
            {m.t}
            <span className="underline">{m.m}</span>)
          </span>
        ))}
        <span className="[font-family:'Liberation_Sans',sans-serif] text-[12px]">Express</span>
      </div>
      <div className="ml-auto flex items-center h-full pr-[2px] gap-[4px] bg-[#f3f1e6]">
        <svg viewBox="0 0 16 16" className="w-4 h-4">
          <path d="M4 12H9" stroke="#555" strokeWidth="2" />
        </svg>
        <svg viewBox="0 0 16 16" className="w-4 h-4">
          <path d="M3 6H10V13H3ZM6 6V3H13V10H10" fill="none" stroke="#555" strokeWidth="1.2" />
        </svg>
        <svg viewBox="0 0 16 16" className="w-4 h-4">
          <path d="M4 4L12 12M12 4L4 12" stroke="#555" strokeWidth="1.8" />
        </svg>
      </div>
    </div>
  );
}

function ToolRow1() {
  return (
    <div className={`h-[27px] shrink-0 ${dither} border-t border-[#fbfaf4] border-b border-b-[#c4c1ae] flex items-center pl-[12px] text-[12px] overflow-hidden`}>
      <Btn name="layers" />
      <div className="w-[2px] shrink-0" />
      <Combo w="w-[299px]">
        <span className="flex items-center gap-[0px]">
          <span className="w-4 h-5 mr-[1px]">
            <Icon name="bulb" />
          </span>
          <span className="w-4 h-5 mr-[-1px]">
            <Icon name="sun" />
          </span>
          <span className="w-4 h-5">
            <Icon name="gear" />
          </span>
          <span className="w-4 h-5 ml-[3px] mr-[1px]">
            <Icon name="lock" />
          </span>
        </span>
        <span className="ml-[2px] flex items-center gap-[3px]">
          <Swatch />
          <span>SIZE</span>
        </span>
      </Combo>
      <Btn name="layerPrev" />
      <Btn name="layerState" />
      <Grip w="w-[18px]" />
      <Combo w="w-[150px]">
        <span className="ml-[6px] mr-[4px] flex">
          <Swatch />
        </span>
        ByLayer
      </Combo>
      <div className="w-[6px] shrink-0" />
      <Combo w="w-[158px]">
        <span className="ml-[5px] w-[60px] h-px bg-black mr-[6px]" />
        ByLayer
      </Combo>
      <div className="w-[8px] shrink-0" />
      <Combo w="w-[125px]">
        <span className="ml-[4px] w-[36px] h-px bg-black mr-[5px]" />
        ByLayer
      </Combo>
      <div className="w-[6px] shrink-0" />
      <Combo w="w-[119px]" disabled>
        <span className="ml-[9px]">ByColor</span>
      </Combo>
      <Grip w="w-[19px]" />
      {["doc", "open", "save"].map((n) => (
        <Btn key={n} name={n} />
      ))}
      <Sep w="w-[6px]" />
      {["print", "preview", "plot3", "publish"].map((n) => (
        <Btn key={n} name={n} />
      ))}
      <Sep />
      {["cut", "copy", "paste", "brush", "bolt"].map((n) => (
        <Btn key={n} name={n} />
      ))}
      <Sep w="w-[6px]" />
      <Btn name="undo" />
      <div className="w-[10px] shrink-0 flex justify-center">
        <span className="border-x-[3px] border-x-transparent border-t-[3px] border-t-black" />
      </div>
      <Btn name="redo" />
      <div className="w-[14px] shrink-0 flex justify-center">
        <span className="border-x-[3px] border-x-transparent border-t-[3px] border-t-[#aaa]" />
      </div>
      <Sep w="w-[6px]" />
      {["pan", "zoomRT", "zoomW", "zoomP"].map((n) => (
        <Btn key={n} name={n} />
      ))}
      <Sep w="w-[6px]" />
      {["props", "design", "palette", "sheet", "markup", "calc"].map((n) => (
        <Btn key={n} name={n} />
      ))}
    </div>
  );
}

function Row({ names }: { names: string[] }) {
  return (
    <>
      {names.map((n) => (
        <Btn key={n} name={n} />
      ))}
    </>
  );
}

function ToolRow2() {
  return (
    <div className={`h-[29px] shrink-0 ${dither} border-t border-[#fbfaf4] border-b-2 border-b-[#a9a692] flex items-center pl-[12px] overflow-hidden`}>
      <Row names={["zA", "zB", "zC", "zD", "zE"]} />
      <Sep />
      <Row names={["zIn", "zOut"]} />
      <Sep w="w-[6px]" />
      <Row names={["zPrev", "zPan"]} />
      <Grip w="w-[19px]" />
      <Btn name="vDoc" />
      <Sep w="w-[7px]" />
      <Row names={["v1", "v2", "v3", "v4", "v5", "v6"]} />
      <Sep w="w-[6px]" />
      <Row names={["d1", "d2", "d3", "d4"]} />
      <Sep w="w-[6px]" />
      <Btn name="camera" />
      <Sep />
      <Btn name="back" />
      <div className="w-[138px] h-[21px] ml-[2px] shrink-0 border border-[#d6d3c2] bg-[#ece9d8] relative">
        <div className="absolute right-px top-px bottom-px w-[15px] flex items-center justify-center border border-[#d6d3c2]">
          <svg viewBox="0 0 9 7" className="w-[9px] h-[7px]">
            <path d="M1 1L4.5 5L8 1" fill="none" stroke="#b8b6a4" strokeWidth="2" />
          </svg>
        </div>
      </div>
      <Grip w="w-[18px]" />
      <Row names={["o1", "o2", "o3"]} />
      <Grip w="w-[19px]" />
      <Row names={["dm1", "dm2", "dm3"]} />
      <Sep w="w-[7px]" />
      <Row names={["dm4", "dm5"]} />
      <Grip w="w-[17px]" />
      <Row names={["r1", "r2", "r3"]} />
      <Sep w="w-[7px]" />
      <Row names={["s1", "s2", "s3", "s4", "s5", "s6", "s7", "s8"]} />
      <Sep />
      <Row names={["s9", "s10"]} />
      <Sep w="w-[6px]" />
      <Row names={["s11", "broom", "s13", "s14", "s15"]} />
      <Grip w="w-[18px]" />
      <Btn name="rn1" />
      <Sep w="w-[6px]" />
      <Btn name="rn2" />
      <Sep w="w-[6px]" />
      <Row names={["rn3", "rn4", "rn5", "rn6"]} />
      <Sep w="w-[6px]" />
      <Btn name="rn7" />
    </div>
  );
}

function VBtn({ name, h = "h-[22px]" }: { name: string; h?: string }) {
  return (
    <div className={`${h} shrink-0 flex items-center justify-center`}>
      <Icon name={name} />
    </div>
  );
}

function VSep({ h }: { h: string }) {
  return (
    <div className={`${h} shrink-0 flex items-center justify-center`}>
      <div className="w-[20px] h-px bg-[#bdbaa8]" />
    </div>
  );
}

function VGrip({ h }: { h: string }) {
  return (
    <div className={`${h} shrink-0 flex flex-col justify-center gap-px px-[2px]`}>
      <div className="h-[3px] bg-[#f7f5ec] border-b border-[#b8b5a2]" />
      <div className="h-[3px] bg-[#f7f5ec] border-b border-[#b8b5a2]" />
    </div>
  );
}

const draw = ["line", "xline", "pline", "polygon", "rect", "arc", "circle", "cloud", "spline", "ellipse", "ellarc", "insert", "block", "point", "hatch", "gradient", "region", "table", "A"];
const modify = ["eraser", "mcopy", "mirror", "offset", "array", "move", "rotate", "scale", "stretch", "trim", "extend", "breakp", "break2", "join", "chamfer", "fillet", "explode"];

function LeftBars() {
  return (
    <div className={`w-[53px] h-full shrink-0 flex ${dither} overflow-hidden`}>
      <div className="w-[25px] shrink-0 flex flex-col">
        <VGrip h="h-[12px]" />
        {draw.map((n) => (
          <VBtn key={n} name={n} h="h-[21.9px]" />
        ))}
        <div className="h-[7px] shrink-0 border-b border-[#bdbaa8]" />
        <VGrip h="h-[10px]" />
        {modify.map((n) => (
          <VBtn key={n} name={n} h="h-[21.9px]" />
        ))}
        <div className="h-[9px] shrink-0 border-b border-[#bdbaa8]" />
        <VGrip h="h-[13px]" />
        <VBtn name="vp" />
        <VSep h="h-[6px]" />
        <VBtn name="box1" />
        <VBtn name="box2" />
        <VBtn name="ball1" />
        <VBtn name="ball2" />
        <VSep h="h-[4px]" />
        <VBtn name="globeDoc" />
      </div>
      <div className="w-[24px] ml-[1px] shrink-0 flex flex-col h-[918px] border-b border-[#bdbaa8] border-x border-x-[#d8d5c4]">
        <VGrip h="h-[13px]" />
        <VBtn name="n1" h="h-[20px]" />
        <VBtn name="n2" h="h-[20px]" />
        <VSep h="h-[7px]" />
        <Col names={["n3", "n4", "n5", "n6", "n7"]} />
        <VSep h="h-[7px]" />
        <Col names={["n8", "n9", "n10"]} />
        <VSep h="h-[7px]" />
        <Col names={["n11", "n12", "n13", "n14"]} />
        <VSep h="h-[6px]" />
        <Col names={["n15", "n16"]} />
        <VSep h="h-[4px]" />
        <VBtn name="magnet" />
        <VGrip h="h-[20px]" />
        <Col names={["t1", "t2", "t3", "t4", "t5", "t6", "t7", "t8", "t9", "t10"]} />
        <VSep h="h-[6px]" />
        <Col names={["u1", "u2", "u3", "u4", "u5"]} />
        <VSep h="h-[5px]" />
        <Col names={["r1", "r2", "r3"]} />
        <VSep h="h-[5px]" />
        <Col names={["w1", "w2", "w3"]} />
      </div>
    </div>
  );
}

function Col({ names }: { names: string[] }) {
  return (
    <>
      {names.map((n) => (
        <VBtn key={n} name={n} />
      ))}
    </>
  );
}

const G = "#00d800";
const cadFont = "Inter, 'Liberation Sans', sans-serif";

function Drawing() {
  return (
    <svg viewBox="53 102 1547 973" className="w-full h-full block">
      {/* parts */}
      <polygon points="1052,562 1155,562 1091,622 1052,612" fill="#e6e000" />
      <polygon points="618,708.5 682,649 722,660 719,708.5" fill="#e6e000" />
      <polygon points="542,469.5 1155,469.5 1155,562 1052,562 1052,548 822,548" fill="#00e4e4" />
      <polygon points="618,709 719,709 719,723 794,723 794,802 618,802" fill="#00e4e4" />
      <polygon points="886,802 911,723 951,723 1230,802" fill="#00e4e4" />
      <polygon points="886,469.5 978,469.5 978,548 858,542" fill="#e40000" />
      <polygon points="794,723 913,723 886,802 794,802" fill="#e40000" />
      <polygon
        points="262,469.5 542,469.5 1403,709 1510,709 1510,802 1230,802 369,562 262,562"
        fill="#e400e4"
      />
      <polygon points="775,548 1052.5,548 1052.5,605 997,723.5 719.5,723.5 719.5,667" fill="#00e400" />
      <circle cx="886" cy="635" r="96.5" fill="#00e400" />

      {/* thin outlines */}
      <g fill="none" stroke="#8a8a8a" strokeWidth="1" shapeRendering="crispEdges">
        <path d="M978.5 469V548M983.5 469V548M1047.5 469V548M1052.5 469V548M719.5 723V802M724.5 723V802M789.5 723V802M793.5 723V802" />
        <path d="M542 469.5H1155V562M618 802H1510M618 709V802" />
        <path d="M775 548.5H1052.5V605M719.5 667V723.5H997" />
      </g>
      <path d="M262 562H475V469.5M1297 802V709H1403" fill="none" stroke="#b040b0" strokeWidth="1" shapeRendering="crispEdges" />
      <circle cx="886" cy="635" r="96.5" fill="none" stroke="#8a8a8a" strokeWidth="1" />
      <circle cx="886" cy="635" r="41" fill="#e40000" stroke="#8a8a8a" strokeWidth="1" />
      <circle cx="886" cy="635" r="36.5" fill="none" stroke="#8a8a8a" strokeWidth="1" />
      <circle cx="851.7" cy="575" r="27" fill="#bdbdbd" stroke="#808080" />
      <circle cx="955" cy="635" r="27" fill="#bdbdbd" stroke="#808080" />
      <circle cx="851.7" cy="695.7" r="27" fill="#bdbdbd" stroke="#808080" />
      <rect x="1053" y="562" width="9" height="4.5" fill="#000" />
      <rect x="710" y="705" width="9" height="4" fill="#000" />
      <polygon points="1091,622 1100,613 1100,625" fill="#000" />

      {/* dimensions */}
      <g stroke={G} strokeWidth="1" shapeRendering="crispEdges" fill="none">
        <path d="M262.5 301V462M1509.5 301V701M262 319.5H1509" />
        <path d="M117 469.5H254M117 802.5H609M135.5 470V802" />
        <path d="M886.5 728V903M955.5 723V903M886 885.5H1046" />
      </g>
      <path d="M1022 548L1151 374" stroke={G} strokeWidth="1" />
      <g fill={G}>
        <polygon points="262,319.5 281,316 281,323" />
        <polygon points="1509,319.5 1490,316 1490,323" />
        <polygon points="135.5,470 132,489 139,489" />
        <polygon points="135.5,802 132,783 139,783" />
        <polygon points="886,885.5 905,882 905,889" />
        <polygon points="955,885.5 936,882 936,889" />
      </g>
      <g fill={G} fontFamily={cadFont} fontWeight="200">
        <text x="847" y="312" fontSize="29" letterSpacing="1">
          270.0
        </text>
        <text x="981" y="878" fontSize="29" letterSpacing="1">
          15.0
        </text>
        <text transform="translate(128 665) rotate(-90)" fontSize="29" letterSpacing="1">
          72.0
        </text>
        <text transform="translate(1093 432) rotate(-52)" fontSize="27" letterSpacing="1">
          ø12.0
        </text>
      </g>

      {/* ucs icon */}
      <path d="M135 905L141 912L148 905M141 912V920" fill="none" stroke="#00c000" strokeWidth="1" />
      <polygon points="129,948 135,948 135,990 129,990" fill="#22e622" />
      <polygon points="131.7,921 122,948.7 140.7,948.7" fill="url(#ug)" />
      <path d="M135 973.5H149L135 987.5H149" fill="none" stroke="#3a7fd8" strokeWidth="1" />
      <rect x="138" y="994" width="44" height="5.5" fill="#e01818" />
      <polygon points="180,987.7 180,1006 209.3,996.7" fill="url(#ur)" />
      <path d="M203 973.5L217 987.5M217 973.5L203 987.5" stroke="#d01010" strokeWidth="1" />
      <circle cx="131.7" cy="996.7" r="9.5" fill="url(#ub)" />
      <path d="M1558 1073H1596V1070" fill="none" stroke="#fff" strokeWidth="1" />
    </svg>
  );
}

function CommandWindow() {
  return (
    <div className={`h-[73px] shrink-0 ${dither} flex flex-col border-t-[3px] border-white`}>
      <div className="h-[5px] shrink-0" />
      <div className="h-px bg-[#222] shrink-0" />
      <div className="h-[9px] shrink-0" />
      <div className="flex-1 flex min-h-0 pl-[8px] pr-[8px] pb-[4px] [font-family:'Noto_Sans_CJK_JP',sans-serif] text-[13px] text-black">
        <div className="w-[7px] shrink-0 flex gap-px">
          <div className="w-[3px] bg-[#f7f5ec] border-r border-[#b8b5a2]" />
          <div className="w-[3px] bg-[#f7f5ec] border-r border-[#b8b5a2]" />
        </div>
        <div className="w-[2px] shrink-0" />
        <div className="flex-1 flex flex-col bg-white border-t-2 border-l-2 border-[#222] min-w-0">
          <div className="h-[33px] shrink-0 flex border-b border-[#a8a696] relative">
            <div className="pt-[1px] pl-px whitespace-nowrap tracking-[1.3px]">
              <div className="text-[9px] leading-[9px]">_w</div>
              <div className="leading-[17px]">最初のコーナーを指定: もう一方のコーナーを指定:</div>
            </div>
            <div className="absolute right-0 top-0 bottom-0 w-[17px] flex flex-col gap-[1px] items-center bg-[#f1efe3]">
              <ScrollBtn d="M1 6L5 2L9 6" h="h-[15px]" w="w-[15px]" />
              <ScrollBtn d="M1 2L5 6L9 2" h="h-[15px]" w="w-[15px]" />
            </div>
          </div>
          <div className="flex-1 flex items-center pl-px relative tracking-[1.3px]">
            コマンド:
            <div className="absolute right-[18px] top-0 flex items-center h-full">
              <ScrollBtn d="M6 1L2 5L6 9" h="h-[14px]" w="w-[14px]" />
              <div className="w-[16px] h-[14px] ml-[2px] bg-[#c5d6f8] border border-[#9db4e0] rounded-[2px] [background-image:repeating-linear-gradient(90deg,#8aa2d4_0_1px,transparent_1px_2px)]" />
              <div className="w-[17px] h-[14px] bg-[#f3f2ea]" />
              <ScrollBtn d="M3 1L7 5L3 9" h="h-[14px]" w="w-[14px]" />
            </div>
          </div>
        </div>
      </div>
    </div>
  );
}

function ScrollBtn({ d, h, w }: { d: string; h: string; w: string }) {
  return (
    <div className={`${h} ${w} shrink-0 rounded-[2px] bg-[#c5d6f8] border border-[#e4ecfb] flex items-center justify-center`}>
      <svg viewBox="0 0 10 10" className="w-[10px] h-[10px]">
        <path d={d} fill="none" stroke="#3a5a9a" strokeWidth="2" />
      </svg>
    </div>
  );
}

function StatusBtn({ w, on, children }: { w: string; on?: boolean; children: ReactNode }) {
  return (
    <div
      className={`${w} h-[18px] shrink-0 flex items-center justify-center border whitespace-nowrap overflow-hidden ${
        on ? "bg-[#f8f7f0] border-t-[#444] border-l-[#444] border-r-white border-b-white" : "bg-[#ece9d8] border-t-white border-l-white border-r-[#aca899] border-b-[#aca899]"
      }`}
    >
      {children}
    </div>
  );
}

function StatusBar() {
  return (
    <div className={`h-[22px] shrink-0 ${dither} border-t border-[#a8a696] flex items-center pl-[5px] text-[12px] text-black [font-family:'Noto_Sans_CJK_JP','Liberation_Sans',sans-serif]`}>
      <div className="w-[113px] h-[18px] shrink-0 border border-[#cfccba] border-t-[#aca899] flex items-center pl-[1px] text-[11px] [font-family:'Liberation_Sans',sans-serif] tracking-[-0.3px]">
        153.9, -94.6, 0.0
      </div>
      <div className="flex items-center gap-[4px] ml-[5px]">
        <StatusBtn w="w-[39px]">
          <span className="text-[10px] tracking-[-1.1px]">スナップ</span>
        </StatusBtn>
        <StatusBtn w="w-[37px]">
          <span className="text-[10px] tracking-[-1.3px]">グリッド</span>
        </StatusBtn>
        <StatusBtn w="w-[55px]">
          <span className="text-[11px] tracking-[-0.5px]">直交モード</span>
        </StatusBtn>
        <StatusBtn w="w-[16px]">
          <span className="text-[11px]">極</span>
        </StatusBtn>
        <StatusBtn w="w-[43px]" on>
          <span className="[font-family:'Liberation_Sans',sans-serif] text-[12px] tracking-[-0.3px]">OSNAP</span>
        </StatusBtn>
        <StatusBtn w="w-[50px]">
          <span className="[font-family:'Liberation_Sans',sans-serif] text-[12px] tracking-[-0.3px]">OTRACK</span>
        </StatusBtn>
        <StatusBtn w="w-[34px]">
          <span className="[font-family:'Liberation_Sans',sans-serif] text-[12px] tracking-[-0.3px]">DUCS</span>
        </StatusBtn>
        <StatusBtn w="w-[27px]">
          <span className="[font-family:'Liberation_Sans',sans-serif] text-[12px] tracking-[-0.3px]">DYN</span>
        </StatusBtn>
        <StatusBtn w="w-[46px]">
          <span className="tracking-[-1px]">線の太さ</span>
        </StatusBtn>
        <div className="w-[19px] h-[19px] shrink-0 bg-[#222] border border-white flex items-center justify-center">
          <svg viewBox="0 0 12 12" className="w-3 h-3">
            <path d="M2 11V2H11M5 5H9" fill="none" stroke="#b8a868" strokeWidth="1.4" />
          </svg>
        </div>
        <div className="w-[18px] h-[18px] ml-[2px] shrink-0 border border-white bg-[#d8dce8] flex items-center justify-center">
          <svg viewBox="0 0 12 12" className="w-3 h-3">
            <path d="M1 1H11V11H1ZM4 1V11M1 4H11" fill="none" stroke="#6c7da8" />
          </svg>
        </div>
      </div>
      <div className="ml-auto flex items-center h-full">
        <div className="w-[64px] h-full flex items-center justify-around bg-[#f7f5ec] border-l border-[#d8d5c4]">
          <svg viewBox="0 0 18 18" className="w-[18px] h-[18px]">
            <ellipse cx="9" cy="6" rx="4.5" ry="6" fill="#a8b4c8" stroke="#4a5a78" />
            <path d="M9 10V16M4 17H14" stroke="#667" strokeWidth="1.5" />
          </svg>
          <svg viewBox="0 0 18 18" className="w-[18px] h-[18px]">
            <path d="M9 8V4C9 0 16 0 16 4V7" fill="none" stroke="#7d6320" strokeWidth="1.6" />
            <rect x="2" y="8" width="11" height="10" fill="#e0b93a" stroke="#333" />
          </svg>
          <svg viewBox="0 0 18 18" className="w-[18px] h-[18px]">
            <rect x="2" y="1" width="9" height="15" fill="#3d5f90" />
            <path d="M6 3V10" stroke="#fff" strokeWidth="1.6" />
            <circle cx="13" cy="13" r="4.5" fill="#1eb83a" stroke="#fff" />
          </svg>
        </div>
        <span className="ml-[4px] border-x-[4px] border-x-transparent border-t-[5px] border-t-black" />
        <div className="ml-[10px] mr-[4px] w-[15px] h-[18px] bg-[#c9d8ec] border-2 border-[#3a6fa8]" />
      </div>
    </div>
  );
}

function TaskBtn({ active, icon, children }: { active?: boolean; icon: ReactNode; children: ReactNode }) {
  return (
    <div
      className={`w-[158px] h-[26px] shrink-0 rounded-[3px] flex items-center pl-[9px] gap-[4px] text-white text-[11px] tracking-[0.25px] whitespace-nowrap ${
        active ? "bg-[#1c46b0] border border-[#173a8f]" : "bg-[#3a7bee] border-t border-[#5b95f5]"
      }`}
    >
      {icon}
      {children}
    </div>
  );
}

function Taskbar() {
  return (
    <div className="h-[30px] shrink-0 flex items-center bg-[linear-gradient(180deg,#3a78e6_0%,#245edb_12%,#2663e0_60%,#1f55c8_90%,#1a48b0_100%)] [font-family:'Liberation_Sans',sans-serif]">
      <div className="w-[110px] h-full shrink-0 rounded-r-[10px] bg-[linear-gradient(180deg,#5cae5c_0%,#3f9a3f_20%,#358c35_80%,#2a702a_100%)] flex items-center pl-[10px] gap-[6px] text-white italic font-bold text-[14px] [font-family:'Noto_Sans_CJK_JP',sans-serif]">
        <svg viewBox="0 0 18 18" className="w-[18px] h-[18px] shrink-0">
          <path d="M2 4C5 2 6 3 8 4L7 9C5 8 3 7 1 9Z" fill="#e8492c" />
          <path d="M10 4C12 5 14 5 17 3L16 8C14 10 11 9 9 9Z" fill="#59b83a" />
          <path d="M1 10C3 8 5 9 7 10L6 15C4 14 2 13 0 15Z" fill="#3a7be0" />
          <path d="M9 10C11 11 13 11 16 9L15 14C13 16 10 15 8 15Z" fill="#f5c72e" />
        </svg>
        スタート
      </div>
      <div className="flex items-center gap-[2px] ml-[10px]">
        <TaskBtn
          icon={
            <svg viewBox="0 0 16 16" className="w-4 h-4 shrink-0">
              <path d="M1 4H6L7 5H15V14H1Z" fill="#f2cf62" stroke="#a07f20" strokeWidth="0.7" />
            </svg>
          }
        >
          iwamuro
        </TaskBtn>
        <TaskBtn
          icon={
            <svg viewBox="0 0 18 18" className="w-[18px] h-[18px] shrink-0">
              <path d="M3 1H12L15 4V17H3Z" fill="#fff" stroke="#555" strokeWidth="0.7" />
              <circle cx="8" cy="10" r="4" fill="none" stroke="#2a6fd8" strokeWidth="2" />
              <path d="M4 10H12" stroke="#2a6fd8" />
            </svg>
          }
        >
          Secure Access SSL ...
        </TaskBtn>
        <TaskBtn
          active
          icon={
            <svg viewBox="0 0 16 16" className="w-4 h-4 shrink-0">
              <rect width="16" height="16" fill="#173c4a" stroke="#dfeeee" />
              <path d="M3 12L6 4L9 12M4 9.5H8M11 6H14V13H11Z" fill="none" stroke="#e8f4f4" />
            </svg>
          }
        >
          AutoCAD 2007 - ED...
        </TaskBtn>
      </div>
      <div className="ml-auto flex items-center h-full">
        <svg viewBox="0 0 18 18" className="w-[18px] h-[18px] mr-[10px]">
          <path d="M3 2H15V16H3Z" fill="#d8332c" stroke="#8d1d18" />
          <circle cx="9" cy="9" r="4" fill="#eee" />
          <path d="M7 9L9 11L12 6" fill="none" stroke="#d8332c" strokeWidth="1.5" />
        </svg>
        <span className="text-white text-[18px] leading-none font-light mr-[1px]">A</span>
        <span className="text-white text-[15px] leading-none [font-family:'Noto_Sans_CJK_JP',sans-serif] mr-[3px]">般</span>
        <svg viewBox="0 0 18 18" className="w-[18px] h-[18px] mr-[2px]">
          <path d="M3 6H15L13 17H5Z" fill="#e7c04a" stroke="#7d6320" strokeWidth="0.6" />
          <circle cx="9" cy="4" r="3" fill="#5fa8e6" />
          <path d="M5 2L8 8" stroke="#c02030" />
        </svg>
        <svg viewBox="0 0 18 18" className="w-[18px] h-[18px] mr-[3px]">
          <path d="M2 6L10 2L16 5V13L8 17L2 13Z" fill="#e0a851" stroke="#7d5a20" strokeWidth="0.6" />
          <path d="M8 9L16 5M8 9V17M8 9L2 6" stroke="#7d5a20" strokeWidth="0.5" fill="none" />
        </svg>
        <div className="w-[15px] h-[17px] border border-black text-[12px] leading-[15px] text-center font-bold text-[#222] bg-[#fdf8d8]">?</div>
        <div className="ml-[10px] flex flex-col text-white text-[8px] leading-[12px] tracking-[0.6px]">
          <div className="flex items-center gap-[6px]">
            CAPS
            <span className="w-[7px] h-[6px] border border-white" />
          </div>
          <div className="flex items-center gap-[6px]">
            KANA
            <span className="border-x-[3px] border-x-transparent border-t-[4px] border-t-white" />
          </div>
        </div>
        <div className="w-[72px] h-full ml-[70px] bg-[linear-gradient(180deg,#2a9ae8_0%,#1090e6_50%,#0f7fd6_100%)] border-l border-[#0a5fb4] flex items-center relative">
          <div className="absolute -left-[1px] top-[5px] w-[19px] h-[19px] rounded-full bg-[#3a8ae8] border border-white flex items-center justify-center">
            <svg viewBox="0 0 10 10" className="w-[10px] h-[10px]">
              <path d="M6.5 1L2.5 5L6.5 9" fill="none" stroke="#fff" strokeWidth="2" />
            </svg>
          </div>
          <svg viewBox="0 0 16 18" className="w-4 h-[18px] ml-[9px] translate-x-[1px] shrink-0">
            <rect x="7" y="1" width="7" height="11" fill="#b8c2d4" stroke="#3a4a68" />
            <rect x="2" y="8" width="6" height="8" fill="#5a6e90" stroke="#2a3a58" />
          </svg>
          <span className="text-white text-[12px] ml-[7px] tracking-[-0.2px] -mt-px">15:07</span>
        </div>
      </div>
    </div>
  );
}

export default function App() {
  return (
    <div className="w-[1600px] h-[1200px] flex flex-col overflow-hidden bg-[#ece9d8] [font-family:'Liberation_Sans',sans-serif]">
      <svg className="absolute w-0 h-0">
        <defs>
          <linearGradient id="sb" x1="0" x2="1" y1="0" y2="0">
            <stop offset="0" stopColor="#6f9dd0" />
            <stop offset="0.5" stopColor="#cfe0f2" />
            <stop offset="1" stopColor="#6f9dd0" />
          </linearGradient>
          <linearGradient id="sb2" x1="0" x2="1" y1="0" y2="1">
            <stop offset="0" stopColor="#fff" />
            <stop offset="1" stopColor="#8fb4dc" />
          </linearGradient>
          <linearGradient id="sb3" x1="0" x2="1" y1="0" y2="0">
            <stop offset="0" stopColor="#d3202c" />
            <stop offset="0.33" stopColor="#f5de3a" />
            <stop offset="0.66" stopColor="#3aa83a" />
            <stop offset="1" stopColor="#7a2cd0" />
          </linearGradient>
          <linearGradient id="sb4" x1="0" x2="0" y1="0" y2="1">
            <stop offset="0" stopColor="#2a6fa8" />
            <stop offset="1" stopColor="#a8d8ee" />
          </linearGradient>
          <linearGradient id="sb5" x1="0" x2="1" y1="0" y2="1">
            <stop offset="0" stopColor="#3d4d66" />
            <stop offset="0.6" stopColor="#7a6a2a" />
            <stop offset="1" stopColor="#222" />
          </linearGradient>
          <radialGradient id="sb6" cx="0.35" cy="0.3" r="0.8">
            <stop offset="0" stopColor="#f7cf3a" />
            <stop offset="0.5" stopColor="#d8843a" />
            <stop offset="1" stopColor="#4a2c9c" />
          </radialGradient>
          <radialGradient id="sb7" cx="0.4" cy="0.3" r="0.8">
            <stop offset="0" stopColor="#dce8f6" />
            <stop offset="1" stopColor="#4f82b8" />
          </radialGradient>
          <linearGradient id="ug" x1="0" x2="1" y1="0" y2="0">
            <stop offset="0" stopColor="#00b800" />
            <stop offset="0.5" stopColor="#66ff66" />
            <stop offset="1" stopColor="#00b800" />
          </linearGradient>
          <linearGradient id="ur" x1="0" x2="0" y1="0" y2="1">
            <stop offset="0" stopColor="#b00000" />
            <stop offset="0.5" stopColor="#ff3030" />
            <stop offset="1" stopColor="#900000" />
          </linearGradient>
          <radialGradient id="ub" cx="0.4" cy="0.3" r="0.8">
            <stop offset="0" stopColor="#3f8fe0" />
            <stop offset="1" stopColor="#123a70" />
          </radialGradient>
        </defs>
      </svg>
      <TitleBar />
      <MenuBar />
      <ToolRow1 />
      <ToolRow2 />
      <div className="h-[973px] shrink-0 flex">
        <LeftBars />
        <div className="flex-1 min-w-0 bg-black">
          <Drawing />
        </div>
      </div>
      <CommandWindow />
      <StatusBar />
      <Taskbar />
    </div>
  );
}
